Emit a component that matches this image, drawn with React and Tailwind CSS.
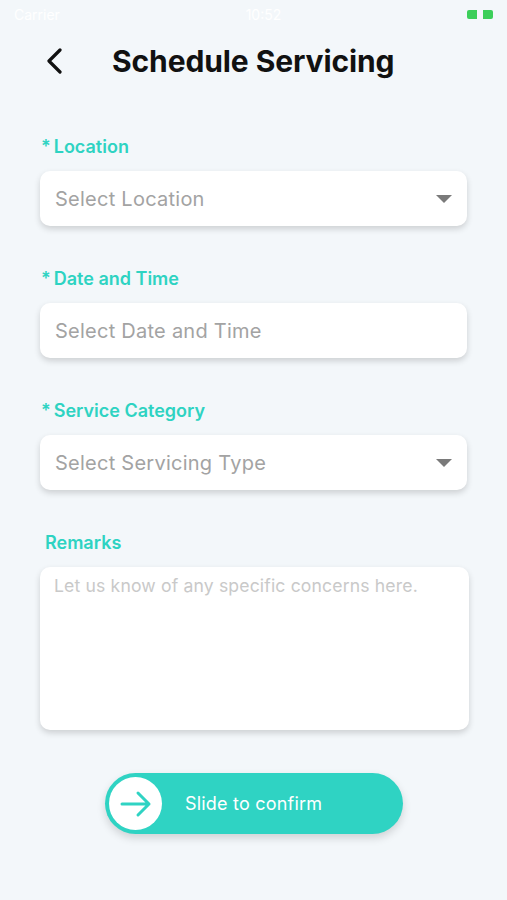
import React from 'react'

const TEAL = 'text-[#2ed3c2]'

function Caret() {
  return (
    <svg width="18" height="10" viewBox="0 0 18 10" className="shrink-0">
      <path d="M1 1H17L9 9Z" fill="#7a7a7a" />
    </svg>
  )
}

function Field({ label, required, placeholder, dropdown }) {
  return (
    <div className="flex flex-col">
      <div className={`font-semibold text-[18px] leading-[22px] ${TEAL} pl-[1px]`}>
        {required && <span className="mr-[3px]">*</span>}
        {label}
      </div>
      <div className="mt-[13px] h-[55px] bg-white rounded-[10px] shadow-[0_3px_6px_rgba(0,0,0,0.16)] flex items-center pl-[15px] pr-[14px]">
        <span className="flex-1 text-[20px] tracking-[0.25px] text-[#a3a3a3]">{placeholder}</span>
        {dropdown && <Caret />}
      </div>
    </div>
  )
}

export default function App() {
  return (
    <div className="w-[507px] h-[900px] bg-[#f3f7fa] font-['Inter','Liberation_Sans',sans-serif] flex flex-col">
      {/* status bar */}
      <div className="h-[28px] flex items-center justify-between px-[14px] text-white text-[14px]">
        <span>Carrier</span>
        <span>10:52</span>
        <div className="flex items-center gap-[4px]">
          <div className="w-[26px] h-[11px] flex items-center justify-between">
            <div className="w-[10px] h-[9px] bg-[#3ccf5a] rounded-l-[2px]" />
            <div className="w-[10px] h-[9px] bg-[#3ccf5a] rounded-r-[2px]" />
          </div>
        </div>
      </div>

      {/* header */}
      <div className="h-[66px] flex items-center pl-[45px]">
        <svg width="18" height="26" viewBox="0 0 18 26">
          <path d="M15 2L4 13L15 24" fill="none" stroke="#111" strokeWidth="3.2" strokeLinecap="round" strokeLinejoin="round" />
        </svg>
        <h1 className="ml-[49px] text-[30px] font-bold text-[#111] tracking-[-0.1px]">Schedule Servicing</h1>
      </div>

      <div className="px-[40px] pt-[42px] flex flex-col">
        <Field label="Location" required placeholder="Select Location" dropdown />
        <div className="h-[42px]" />
        <Field label="Date and Time" required placeholder="Select Date and Time" />
        <div className="h-[42px]" />
        <Field label="Service Category" required placeholder="Select Servicing Type" dropdown />

        <div className="mt-[42px] pl-[5px] font-semibold text-[18px] leading-[22px] text-[#2ed3c2]">Remarks</div>
        <div className="mt-[13px] h-[163px] w-[429px] bg-white rounded-[10px] shadow-[0_3px_6px_rgba(0,0,0,0.16)] px-[14px] pt-[6px]">
          <span className="text-[17.6px] tracking-[0.15px] text-[#c9c9c9]">Let us know of any specific concerns here.</span>
        </div>
      </div>

      <div className="mt-[43px] flex justify-center pl-[1px]">
        <div className="w-[298px] h-[61px] rounded-full bg-[#2fd3c3] shadow-[0_4px_8px_rgba(0,0,0,0.15)] flex items-center pl-[4px]">
          <div className="w-[53px] h-[53px] rounded-full bg-white flex items-center justify-center">
            <svg width="34" height="30" viewBox="0 0 34 30">
              <path d="M3 15H30M19 4L30 15L19 26" fill="none" stroke="#2fd3c3" strokeWidth="3" strokeLinecap="round" strokeLinejoin="round" />
            </svg>
          </div>
          <span className="ml-[23px] text-white text-[18px] tracking-[0.2px]">Slide to confirm</span>
        </div>
      </div>
    </div>
  )
}
